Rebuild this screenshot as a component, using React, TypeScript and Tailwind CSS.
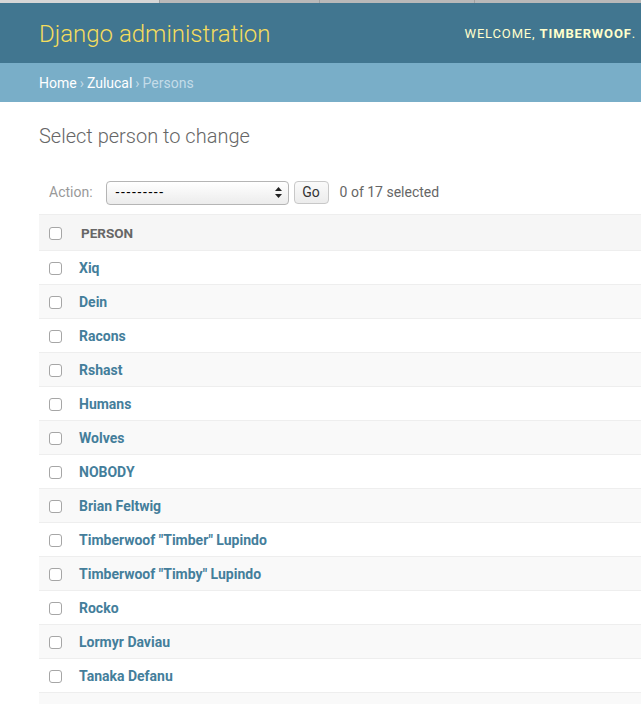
import * as React from 'react'

const persons = [
	'Xiq',
	'Dein',
	'Racons',
	'Rshast',
	'Humans',
	'Wolves',
	'NOBODY',
	'Brian Feltwig',
	'Timberwoof "Timber" Lupindo',
	'Timberwoof "Timby" Lupindo',
	'Rocko',
	'Lormyr Daviau',
	'Tanaka Defanu',
	'Kiri Wolfe',
	'Sayuri',
	'Tobias',
	'Zulu',
]

function Checkbox() {
	return <span className="block w-[13px] h-[13px] rounded-[3px] border border-[#a6a6a6] bg-white shrink-0"></span>
}

export default function App() {
	return (
		<div className="w-[641px] h-[704px] overflow-hidden bg-white font-['Roboto',sans-serif]">
			{/* browser tab strip */}
			<div className="h-[3px] flex">
				<div className="w-[160px] bg-[#d6d6d6] border-r border-[#a0a0a0]"></div>
				<div className="w-[160px] bg-[#b9b9b9] border-r border-[#a0a0a0]"></div>
				<div className="w-[155px] bg-[#b9b9b9] border-r border-[#a0a0a0]"></div>
				<div className="flex-grow bg-[#b9b9b9]"></div>
			</div>

			<div className="h-[60px] bg-[#417690] flex flex-row items-center justify-between pl-[39px] pr-[5px]">
				<p className="text-[24px] font-light text-[#f5dd5d] leading-none pt-[1px]">Django administration</p>
				<p className="text-[13px] tracking-[0.85px] text-[#ffc] uppercase leading-none">
					Welcome, <strong className="font-bold">Timberwoof</strong>.
				</p>
			</div>

			<div className="h-[39px] bg-[#79aec8] flex items-center pl-[39px] pt-[1px] text-[14px] text-white">
				<a>Home</a>
				<span className="px-[3px] text-[#c4dce8]">›</span>
				<a>Zulucal</a>
				<span className="px-[3px] text-[#c4dce8]">›</span>
				<span className="text-[#c4dce8]">Persons</span>
			</div>

			<div className="pl-[39px]">
				<h1 className="pt-[22px] text-[20px] font-light text-[#666] leading-[24px]">Select person to change</h1>

				<div className="mt-[23px] h-[44px] flex flex-row items-center pl-[10px] text-[14px] border-b border-[#eee]">
					<span className="text-[#999] mr-[13px]">Action:</span>
					<div className="w-[183px] h-[24px] rounded-[4px] border border-[#b5b5b5] bg-gradient-to-b from-white to-[#ececec] flex items-center justify-between pl-[9px] pr-[6px] text-black">
						<span className="tracking-[1.6px]">---------</span>
						<svg width="7" height="11" viewBox="0 0 7 11">
							<path d="M3.5 0 L7 4 L0 4 Z" fill="#222" />
							<path d="M0 7 L7 7 L3.5 11 Z" fill="#222" />
						</svg>
					</div>
					<div className="ml-[5px] w-[35px] h-[23px] rounded-[4px] border border-[#c8c8c8] bg-gradient-to-b from-[#fafafa] to-[#ececec] flex items-center justify-center text-[#333]">Go</div>
					<span className="ml-[11px] text-[#666]">0 of 17 selected</span>
				</div>

				<div className="h-[36px] bg-[#f6f6f6] border-b border-[#eee] flex items-center pl-[10px] pt-[1px]">
					<Checkbox />
					<span className="ml-[19px] text-[13.5px] font-bold text-[#666] uppercase">Person</span>
				</div>

				{persons.map((name, i) => (
					<div
						key={name}
						className={`h-[34px] border-b border-[#eee] flex items-center pl-[10px] pt-[2px] ${i % 2 === 0 ? 'bg-white' : 'bg-[#f9f9f9]'}`}
					>
						<Checkbox />
						<a className="ml-[17px] text-[14px] font-bold text-[#447e9b]">{name}</a>
					</div>
				))}
			</div>
		</div>
	)
}
